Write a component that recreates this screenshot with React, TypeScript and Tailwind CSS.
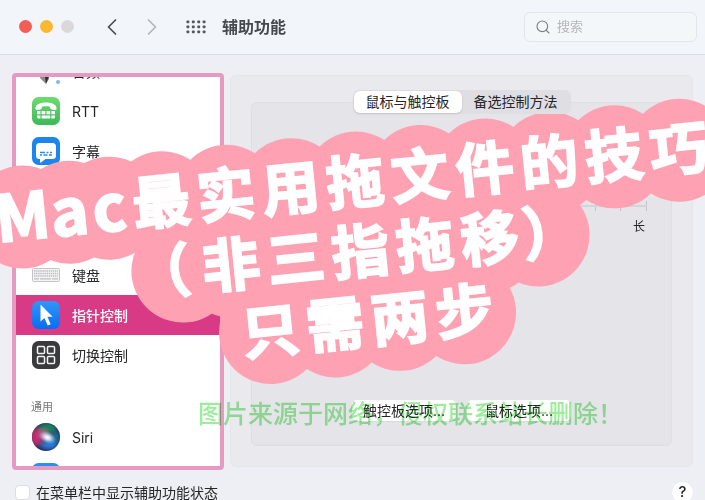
import React from 'react';
import { ChevronLeft, ChevronRight, Search } from 'lucide-react';

function AudioIcon() {
  return (
    <svg viewBox="0 0 28 28" className="h-7 w-7">
      <path d="M8 4h9v18l-3 5-6-6z" fill="#8d8d90" />
      <path d="M13 20l4-1-3 8z" fill="#2f2f32" />
      <circle cx="26" cy="25" r="2" fill="#86b4ec" />
    </svg>
  );
}

function RttIcon() {
  return (
    <svg viewBox="0 0 28 28" className="h-7 w-7">
      <defs>
        <linearGradient id="rtt" x1="0" y1="0" x2="0" y2="1">
          <stop offset="0" stopColor="#6edb6e" />
          <stop offset="1" stopColor="#3cb95a" />
        </linearGradient>
      </defs>
      <rect width="28" height="28" rx="6.5" fill="url(#rtt)" />
      <path
        d="M3.4 11.3C3.6 7.6 8 5.5 14 5.5s10.4 2.100 10.600 5.800c0 1.200-.5 1.700-1.600 1.600l-3.300-.4c-1-.1-1.400-.6-1.500-1.500l-.1-1.200c-2.400-.6-5.800-.6-8.200 0L9.800 11c-.1.900-.5 1.400-1.500 1.500l-3.300.4c-1.100.1-1.600-.4-1.600-1.600z"
        fill="#fff"
      />
      <path
        d="M5 14h3.400v3.200H5zM9.600 14h3.700v3.200H9.600zM14.500 14h3.700v3.200h-3.700zM19.400 14H23v3.200h-3.600zM5 18.400h3.400v3.200H6.500A1.500 1.500 0 0 1 5 20.100zM9.600 18.400h8.600v3.200H9.600zM19.400 18.400H23v1.700a1.500 1.500 0 0 1-1.500 1.500h-2.100z"
        fill="#fff"
      />
    </svg>
  );
}

function CaptionsIcon() {
  return (
    <svg viewBox="0 0 28 28" className="h-7 w-7">
      <rect width="28" height="28" rx="6.5" fill="#1c86ee" />
      <path
        d="M7.500 6h13A3.500 3.500 0 0 1 24 9.500v9a3.500 3.500 0 0 1-3.500 3.500h-7l-4.500 3.500c-.6.400-1 .1-1-.5v-3h-.5A3.500 3.500 0 0 1 4 18.500v-9A3.500 3.500 0 0 1 7.500 6z"
        fill="#fff"
      />
      <path
        d="M8 15.500h5M14.500 15.500h2M18 15.500h2M8 18h2M11.500 18h4M17 18h3"
        stroke="#2b8be8"
        strokeWidth="1.3"
      />
    </svg>
  );
}

function KeyboardIcon() {
  return (
    <svg viewBox="0 0 28 28" className="h-7 w-7">
      <rect x=".5" y="7.5" width="27" height="13" rx="1" fill="#f4f4f4" stroke="#c4c4c6" />
      <path
        d="M2 10h24M2 12.500h24M2 15h24"
        stroke="#bdbdc0"
        strokeWidth="1.3"
        strokeDasharray="1.4 .7"
      />
      <path d="M2 17.800h5M8 17.800h11M20 17.800h6" stroke="#bdbdc0" strokeWidth="1.3" />
    </svg>
  );
}

function PointerIcon() {
  return (
    <svg viewBox="0 0 28 28" className="h-7 w-7">
      <defs>
        <linearGradient id="pointer" x1="0" y1="0" x2="0" y2="1">
          <stop offset="0" stopColor="#2f97fb" />
          <stop offset="1" stopColor="#0a6cf0" />
        </linearGradient>
      </defs>
      <rect width="28" height="28" rx="6.5" fill="url(#pointer)" />
      <path d="M8.500 3.500v17l3.900-3.600 3.300 7.600 3-1.300-3.300-7.400h5.200z" fill="#fff" />
    </svg>
  );
}

function SwitchIcon() {
  return (
    <svg viewBox="0 0 28 28" className="h-7 w-7">
      <rect width="28" height="28" rx="6.5" fill="#3a3a3c" />
      <g fill="none" stroke="#f2f2f2" strokeWidth="1.5">
        <rect x="5.5" y="5.5" width="7" height="7" rx="1" />
        <rect x="15.5" y="5.5" width="7" height="7" rx="1" />
        <rect x="5.5" y="15.5" width="7" height="7" rx="1" />
        <rect x="15.5" y="15.5" width="7" height="7" rx="1" />
      </g>
    </svg>
  );
}

function SiriIcon() {
  return (
    <svg viewBox="0 0 28 28" className="h-7 w-7">
      <defs>
        <clipPath id="orb">
          <circle cx="14" cy="14" r="14" />
        </clipPath>
        <filter id="soft" x="-50%" y="-50%" width="200%" height="200%">
          <feGaussianBlur stdDeviation="2.2" />
        </filter>
        <radialGradient id="glow">
          <stop offset="0" stopColor="#fff" />
          <stop offset=".35" stopColor="#e6f2ff" stopOpacity=".85" />
          <stop offset="1" stopColor="#9fd0ff" stopOpacity="0" />
        </radialGradient>
      </defs>
      <g clipPath="url(#orb)">
        <rect width="28" height="28" fill="#22305c" />
        <g filter="url(#soft)">
          <ellipse cx="16" cy="5" rx="9" ry="5" fill="#1f8060" />
          <ellipse cx="4" cy="14" rx="6" ry="9" fill="#c42a6c" />
          <ellipse cx="11" cy="12" rx="5" ry="4" fill="#c05a8c" />
          <ellipse cx="23" cy="15" rx="5" ry="6" fill="#1c6f94" />
          <ellipse cx="17" cy="22" rx="8" ry="4" fill="#2a7fe0" />
        </g>
        <ellipse cx="15.5" cy="14.5" rx="9" ry="6" fill="url(#glow)" transform="rotate(25 15.5 14.5)" />
      </g>
    </svg>
  );
}

function BlueIcon() {
  return (
    <svg viewBox="0 0 28 28" className="h-7 w-7">
      <rect width="28" height="28" rx="6.5" fill="#2a8ff2" />
    </svg>
  );
}

interface RowProps {
  icon: React.ReactNode;
  label?: string;
  selected?: boolean;
}

function Row({ icon, label, selected }: RowProps) {
  return (
    <li>
      <button
        className={`flex h-10 w-full items-center gap-3 pl-4 text-left text-[14px] ${
          selected ? 'bg-[#d83a86] font-medium text-white' : 'text-[#262628]'
        }`}
      >
        {icon}
        {label}
      </button>
    </li>
  );
}

const stickerLines = [
  ['M', 'a', 'c', '最', '实', '用', '拖', '文', '件', '的', '技', '巧'],
  ['（', '非', '三', '指', '拖', '移', '）'],
  ['只', '需', '两', '步'],
];

const glyphClasses: Record<string, string> = {
  M: 'w-[54px] text-[64px]',
  a: 'w-10 text-[64px]',
  c: 'w-10 text-[64px]',
  '（': 'w-8 justify-end pr-2 text-[58px]',
  '）': 'w-8 justify-start text-[58px]',
};

function Sticker() {
  return (
    <div className="pointer-events-none absolute inset-0 flex items-center justify-center overflow-hidden pt-[6px] pl-4">
      <div className="isolate flex shrink-0 rotate-[-5.8deg] flex-col items-center font-['Noto_Sans_CJK_SC',sans-serif] font-bold text-white [-webkit-text-stroke:2px_white]">
        {stickerLines.map((line, i) => (
          <p key={i} className="flex h-[70px] items-center">
            {line.map((glyph, j) => (
              <span
                key={j}
                className={`relative flex h-[70px] items-center justify-center pb-[10px] leading-none before:absolute before:top-1/2 before:left-1/2 before:-z-10 before:h-[103px] before:w-[103px] before:-translate-x-1/2 before:-translate-y-1/2 before:rounded-full before:bg-[#fea1b2] before:content-[''] ${
                  glyphClasses[glyph] ?? 'w-[65px] text-[58px]'
                }`}
              >
                {glyph}
              </span>
            ))}
          </p>
        ))}
      </div>
    </div>
  );
}

export default function App() {
  return (
    <div className="relative flex h-screen flex-col overflow-hidden bg-[#eeeff4] font-['Inter','Noto_Sans_CJK_SC',sans-serif] text-[#262628]">
      <header className="flex h-[55px] shrink-0 items-center border-b border-[#d3e0e8] bg-[#f2f6fa] pr-2 pb-px pl-[19px]">
        <div className="flex gap-2">
          <button aria-label="关闭" className="h-[13px] w-[13px] rounded-full bg-[#f15e56]" />
          <button aria-label="最小化" className="h-[13px] w-[13px] rounded-full bg-[#f8b930]" />
          <button aria-label="缩放" className="h-[13px] w-[13px] rounded-full bg-[#d9d9dd]" />
        </div>
        <div className="ml-6 flex gap-3">
          <button aria-label="后退" className="text-[#4a4d51]">
            <ChevronLeft className="h-7 w-7" strokeWidth={1.5} />
          </button>
          <button aria-label="前进" className="text-[#b2b5b9]">
            <ChevronRight className="h-7 w-7" strokeWidth={1.5} />
          </button>
        </div>
        <button aria-label="显示全部" className="ml-5">
          <svg viewBox="0 0 20 14" className="h-[14px] w-5" fill="#55585c">
            {[0, 1, 2].map((row) =>
              [0, 1, 2, 3].map((col) => (
                <rect key={`${row}-${col}`} x={0.5 + col * 5.4} y={0.5 + row * 5} width="2.8" height="2.8" rx=".7" />
              ))
            )}
          </svg>
        </button>
        <h1 className="ml-4 text-[16px] font-bold text-[#46494d]">辅助功能</h1>
        <label className="ml-auto flex h-[30px] w-[173px] items-center gap-[6px] rounded-md border border-[#e2e6eb] bg-[#f4f7fa] px-[10px]">
          <Search className="h-4 w-4 shrink-0 text-[#7b7f84]" strokeWidth={1.7} />
          <input
            type="text"
            aria-label="搜索"
            placeholder="搜索"
            className="w-full min-w-0 bg-transparent text-[13px] outline-none placeholder:text-[#b4b7bb]"
          />
        </label>
      </header>

      <main className="flex min-h-0 flex-1 gap-[6px] pt-[18px] pr-3 pl-3">
        <nav className="w-[212px] shrink-0 overflow-hidden rounded-sm border-4 border-[#e79ac1] bg-white">
          <ul className="-mt-[26px]">
            <Row icon={<AudioIcon />} label="音频" />
            <Row icon={<RttIcon />} label="RTT" />
            <Row icon={<CaptionsIcon />} label="字幕" />
          </ul>
          <ul className="mt-[84px]">
            <Row icon={<KeyboardIcon />} label="键盘" />
            <Row icon={<PointerIcon />} label="指针控制" selected />
            <Row icon={<SwitchIcon />} label="切换控制" />
          </ul>
          <h2 className="mt-[22px] pl-[15px] text-[11px] leading-5 text-[#77777b]">通用</h2>
          <ul>
            <Row icon={<SiriIcon />} label="Siri" />
            <Row icon={<BlueIcon />} />
          </ul>
        </nav>

        <section className="mt-[2px] mb-[3px] flex min-w-0 flex-1 flex-col items-center rounded-md border border-[#e5e5ea] bg-[#e9e9ee] px-5 pt-[14px] pb-5">
          <div role="tablist" className="z-10 -mb-3 flex h-6 shrink-0 rounded-md bg-[#dedee3] p-px text-[14px] leading-5">
            <button role="tab" aria-selected="true" className="rounded-md bg-white px-3 shadow-sm">
              鼠标与触控板
            </button>
            <button role="tab" aria-selected="false" className="px-3">
              备选控制方法
            </button>
          </div>
          <div className="flex w-full flex-1 flex-col rounded-md border border-[#dedee3] bg-[#e4e4e9] px-6 pt-[98px] pb-6">
            <div className="flex w-[180px] flex-col items-end self-end">
              <div className="relative flex h-[10px] w-full justify-between">
                <div className="absolute inset-x-0 top-1 h-[2px] bg-[#d3d3d9]" />
                {[0, 1, 2, 3, 4, 5, 6, 7].map((tick) => (
                  <span key={tick} className="w-px bg-[#c3c3ca]" />
                ))}
              </div>
              <span className="mt-[6px] pr-[2px] text-[12px] leading-5">长</span>
            </div>
            <div className="mt-auto flex justify-center gap-[11px] text-[14px] leading-5">
              <button className="h-[21px] w-[104px] rounded-[5px] bg-white shadow-xs">触控板选项...</button>
              <button className="h-[21px] w-[104px] rounded-[5px] bg-white shadow-xs">鼠标选项...</button>
            </div>
          </div>
        </section>
      </main>

      <footer className="-mb-[14px] flex h-11 shrink-0 items-center justify-between pr-3 pl-[15px]">
        <label className="flex items-center gap-[6px] text-[14px]">
          <input
            type="checkbox"
            className="h-[15px] w-[15px] appearance-none rounded-[4px] border border-[#dcdce1] bg-white"
          />
          在菜单栏中显示辅助功能状态
        </label>
        <button aria-label="帮助" className="h-[21px] w-[21px] rounded-full bg-white text-[15px] leading-5 font-medium shadow-xs">
          ?
        </button>
      </footer>

      <Sticker />

      <p className="pointer-events-none absolute top-[396px] left-[198px] text-[25px] leading-9 font-medium whitespace-nowrap text-[#9cec9c] mix-blend-multiply">
        图片来源于网络，侵权联系站长删除！
      </p>
    </div>
  );
}
